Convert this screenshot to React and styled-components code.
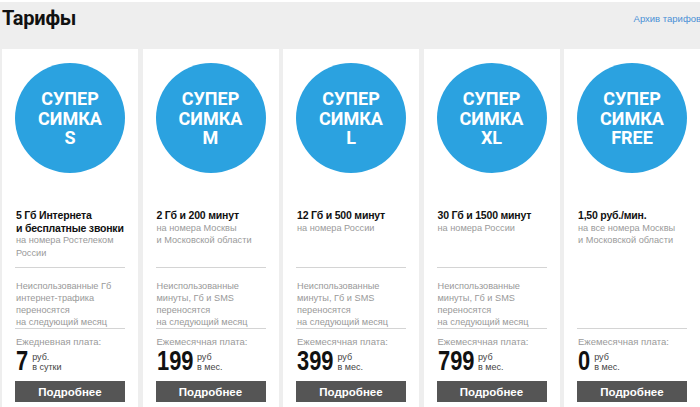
import styled, { createGlobalStyle } from 'styled-components';

const GlobalStyle = createGlobalStyle`
	html, body {
		margin: 0;
		padding: 0;
		background: #fff;
		overflow: hidden;
	}
	body {
		font-family: "Liberation Sans", Arial, sans-serif;
	}
`;

const Page = styled.div`
	margin-top: 2px;
	background-color: #eeeeee;
	padding: 0 0 0 2px;
	min-height: 405px;
`;

const Header = styled.div`
	display: flex;
	justify-content: space-between;
	align-items: flex-start;
	height: 47px;
`;

const Title = styled.h1`
	margin: 4px 0 0 0;
	font-family: Roboto, sans-serif;
	font-weight: 700;
	font-size: 20px;
	line-height: 24px;
	letter-spacing: -0.2px;
	color: #111;
`;

const ArchiveLink = styled.a`
	flex-shrink: 0;
	margin: 11px -9px 0 0;
	font-size: 9.5px;
	line-height: 12px;
	color: #4a90d6;
	text-decoration: none;
	white-space: nowrap;
`;

const Grid = styled.div`
	display: grid;
	grid-template-columns: repeat(5, 136px);
	column-gap: 4.5px;
`;

const Card = styled.div`
	background: #fff;
	padding: 14px 13px 8px;
	display: flex;
	flex-direction: column;
`;

const Circle = styled.div`
	width: 110px;
	height: 110px;
	border-radius: 50%;
	background: #2ba2e0;
	margin: 0 auto;
	display: flex;
	flex-direction: column;
	align-items: center;
	justify-content: center;
	color: #fff;
	font-family: Roboto, sans-serif;
	font-weight: 700;
	font-size: 18px;
	line-height: 19.5px;
	padding-top: 1px;
	box-sizing: border-box;
`;

const Info = styled.div`
	margin-top: 36px;
	height: 58px;
	padding-left: 1px;
`;

const PlanName = styled.div`
	font-weight: 700;
	font-size: 10.5px;
	letter-spacing: -0.2px;
	line-height: 12.5px;
	color: #111;
`;

const Note = styled.div`
	font-size: 9.2px;
	line-height: 12.5px;
	color: #9a9a9a;
`;

const Feature = styled.div`
	border-top: 1px solid ${({ $empty }) => ($empty ? 'transparent' : '#d4d4d4')};
	height: 48px;
	padding: 12px 0 0 1px;
	font-size: 9.2px;
	line-height: 12px;
	color: #999;
`;

const Price = styled.div`
	border-top: 1px solid #d4d4d4;
	padding: 7px 0 0 1px;
`;

const PriceLabel = styled.div`
	font-size: 9.5px;
	line-height: 12px;
	color: #9a9a9a;
`;

const PriceRow = styled.div`
	display: flex;
	align-items: center;
	gap: 4px;
	height: 24px;
	margin-top: 1px;
`;

// tall narrow digits: the regular face squeezed horizontally
const Amount = styled.span`
	display: inline-block;
	font-weight: 700;
	font-size: 28px;
	line-height: 24px;
	color: #111;
	transform: scaleX(0.78);
	transform-origin: left center;
`;

const Unit = styled.span`
	font-size: 9px;
	line-height: 10px;
	color: #444;
	margin-top: 1px;
`;

const MoreButton = styled.button`
	margin-top: 8px;
	height: 21px;
	border: none;
	background: #555;
	color: #fff;
	font-family: "Liberation Sans", Arial, sans-serif;
	font-weight: 700;
	font-size: 11.5px;
	cursor: pointer;
`;

const plans = [
	{
		size: 'S',
		name: ['5 Гб Интернета', 'и бесплатные звонки'],
		note: ['на номера Ростелеком', 'России'],
		feature: ['Неиспользованные Гб', 'интернет-трафика', 'переносятся', 'на следующий месяц'],
		label: 'Ежедневная плата:',
		amount: '7',
		unit: ['руб.', 'в сутки'],
	},
	{
		size: 'M',
		name: ['2 Гб и 200 минут'],
		note: ['на номера Москвы', 'и Московской области'],
		feature: ['Неиспользованные', 'минуты, Гб и SMS', 'переносятся', 'на следующий месяц'],
		label: 'Ежемесячная плата:',
		amount: '199',
		unit: ['руб', 'в мес.'],
	},
	{
		size: 'L',
		name: ['12 Гб и 500 минут'],
		note: ['на номера России'],
		feature: ['Неиспользованные', 'минуты, Гб и SMS', 'переносятся', 'на следующий месяц'],
		label: 'Ежемесячная плата:',
		amount: '399',
		unit: ['руб', 'в мес.'],
	},
	{
		size: 'XL',
		name: ['30 Гб и 1500 минут'],
		note: ['на номера России'],
		feature: ['Неиспользованные', 'минуты, Гб и SMS', 'переносятся', 'на следующий месяц'],
		label: 'Ежемесячная плата:',
		amount: '799',
		unit: ['руб', 'в мес.'],
	},
	{
		size: 'FREE',
		name: ['1,50 руб./мин.'],
		note: ['на все номера Москвы', 'и Московской области'],
		feature: null,
		label: 'Ежемесячная плата:',
		amount: '0',
		unit: ['руб', 'в мес.'],
	},
];

const lines = (arr) => arr.map((line) => <div key={line}>{line}</div>);

const PlanCard = ({ plan }) => (
	<Card>
		<Circle>
			<span>СУПЕР</span>
			<span>СИМКА</span>
			<span>{plan.size}</span>
		</Circle>
		<Info>
			<PlanName>{lines(plan.name)}</PlanName>
			<Note>{lines(plan.note)}</Note>
		</Info>
		<Feature $empty={!plan.feature}>{plan.feature && lines(plan.feature)}</Feature>
		<Price>
			<PriceLabel>{plan.label}</PriceLabel>
			<PriceRow>
				{/* the squeeze leaves the box wide, so pull the unit back by what was lost */}
				<Amount style={{ marginRight: `${-0.556 * 0.22 * plan.amount.length}em` }}>
					{plan.amount}
				</Amount>
				<Unit>{lines(plan.unit)}</Unit>
			</PriceRow>
		</Price>
		<MoreButton>Подробнее</MoreButton>
	</Card>
);

export default function App() {
	return (
		<>
			<GlobalStyle />
			<Page>
				<Header>
					<Title>Тарифы</Title>
					<ArchiveLink href="#">Архив тарифов »</ArchiveLink>
				</Header>
				<Grid>
					{plans.map((plan) => (
						<PlanCard key={plan.size} plan={plan} />
					))}
				</Grid>
			</Page>
		</>
	);
}
